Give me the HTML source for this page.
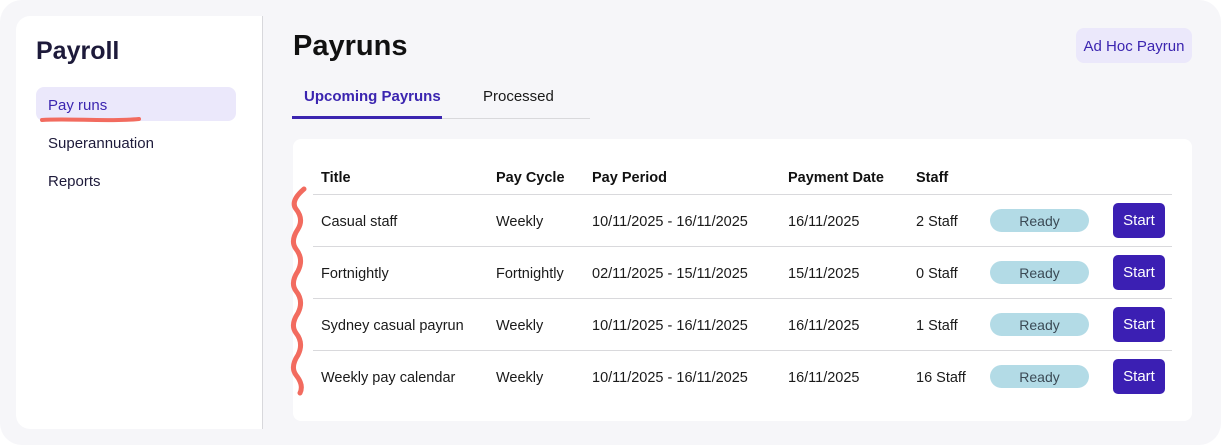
<!DOCTYPE html><html><head><style>
body{margin:0;width:1221px;height:445px;background:#fff;font-family:"Liberation Sans",sans-serif;position:relative;overflow:hidden}
.bg{position:absolute;left:0;top:0;width:1221px;height:445px;background:#f6f6f9;border-radius:22px}
.side{position:absolute;left:16px;top:16px;width:246px;height:413px;background:#fff;border-radius:14px 0 0 14px;border-right:1px solid #d8d8dc}
.abs{position:absolute;white-space:nowrap}
.card{position:absolute;left:293px;top:139px;width:899px;height:282px;background:#fff;border-radius:8px}
.line{position:absolute;left:313px;width:859px;height:1px;background:#d9d9dc}
.t{position:absolute;font-size:14.5px;color:#1a1a1a;white-space:nowrap}
.h{font-weight:bold;color:#111}
.pill{position:absolute;left:990px;width:99px;height:23px;border-radius:12px;background:#b3dbe6;color:#3b4a55;font-size:14px;text-align:center;line-height:24px}
.btn{position:absolute;left:1113px;width:52px;height:35px;border-radius:5px;background:#3b1fb3;color:#fff;font-size:15px;text-align:center;line-height:36px}
</style></head><body>
<div class="bg"></div>
<div class="side"></div>
<div class="abs" style="left:36px;top:37px;font-size:25px;font-weight:bold;color:#1d1a3a">Payroll</div>
<div class="abs" style="left:36px;top:87px;width:200px;height:34px;background:#ebe8fb;border-radius:8px"></div>
<div class="abs" style="left:48px;top:97px;font-size:15px;color:#3b25b0">Pay runs</div>
<svg class="abs" style="left:38px;top:114px" width="106" height="12"><path d="M4 6 C30 4 70 8 101 5" stroke="#f26b5f" stroke-width="4" fill="none" stroke-linecap="round"/></svg>
<div class="abs" style="left:48px;top:135px;font-size:15px;color:#1d1a3a">Superannuation</div>
<div class="abs" style="left:48px;top:173px;font-size:15px;color:#1d1a3a">Reports</div>
<div class="abs" style="left:293px;top:30px;font-size:29px;font-weight:bold;color:#111">Payruns</div>
<div class="abs" style="left:1076px;top:28px;width:116px;height:35px;background:#ebe8fb;border-radius:8px;color:#3b25b0;font-size:15px;text-align:center;line-height:37px">Ad Hoc Payrun</div>
<div class="abs" style="left:304px;top:88px;font-size:15px;font-weight:bold;color:#3b25b0">Upcoming Payruns</div>
<div class="abs" style="left:483px;top:88px;font-size:15px;color:#1a1a1a">Processed</div>
<div class="abs" style="left:292px;top:118px;width:298px;height:1px;background:#d9d9dc"></div>
<div class="abs" style="left:292px;top:116px;width:150px;height:3px;background:#3b25b0"></div>
<div class="card"></div>
<div class="t h" style="left:321px;top:170px">Title</div><div class="t h" style="left:496px;top:170px">Pay Cycle</div><div class="t h" style="left:592px;top:170px">Pay Period</div><div class="t h" style="left:788px;top:170px">Payment Date</div><div class="t h" style="left:916px;top:170px">Staff</div>
<div class="line" style="top:194px"></div><div class="line" style="top:246px"></div><div class="line" style="top:298px"></div><div class="line" style="top:350px"></div>
<div class="t" style="left:321px;top:214px">Casual staff</div><div class="t" style="left:496px;top:214px">Weekly</div><div class="t" style="left:592px;top:214px">10/11/2025 - 16/11/2025</div><div class="t" style="left:788px;top:214px">16/11/2025</div><div class="t" style="left:916px;top:214px">2 Staff</div>
<div class="pill" style="top:209px">Ready</div><div class="btn" style="top:203px">Start</div>
<div class="t" style="left:321px;top:266px">Fortnightly</div><div class="t" style="left:496px;top:266px">Fortnightly</div><div class="t" style="left:592px;top:266px">02/11/2025 - 15/11/2025</div><div class="t" style="left:788px;top:266px">15/11/2025</div><div class="t" style="left:916px;top:266px">0 Staff</div>
<div class="pill" style="top:261px">Ready</div><div class="btn" style="top:255px">Start</div>
<div class="t" style="left:321px;top:318px">Sydney casual payrun</div><div class="t" style="left:496px;top:318px">Weekly</div><div class="t" style="left:592px;top:318px">10/11/2025 - 16/11/2025</div><div class="t" style="left:788px;top:318px">16/11/2025</div><div class="t" style="left:916px;top:318px">1 Staff</div>
<div class="pill" style="top:313px">Ready</div><div class="btn" style="top:307px">Start</div>
<div class="t" style="left:321px;top:370px">Weekly pay calendar</div><div class="t" style="left:496px;top:370px">Weekly</div><div class="t" style="left:592px;top:370px">10/11/2025 - 16/11/2025</div><div class="t" style="left:788px;top:370px">16/11/2025</div><div class="t" style="left:916px;top:370px">16 Staff</div>
<div class="pill" style="top:365px">Ready</div><div class="btn" style="top:359px">Start</div>
<svg class="abs" style="left:284px;top:185px" width="30" height="216"><path d="M20 4 Q6 16 12 24 Q20 34 14 44 Q6 56 12 64 Q20 74 14 86 Q6 98 12 106 Q20 116 14 128 Q6 140 12 148 Q20 158 14 170 Q6 182 12 190 Q20 200 16 208" stroke="#f26b5f" stroke-width="5" fill="none" stroke-linecap="round"/></svg>
</body></html>
